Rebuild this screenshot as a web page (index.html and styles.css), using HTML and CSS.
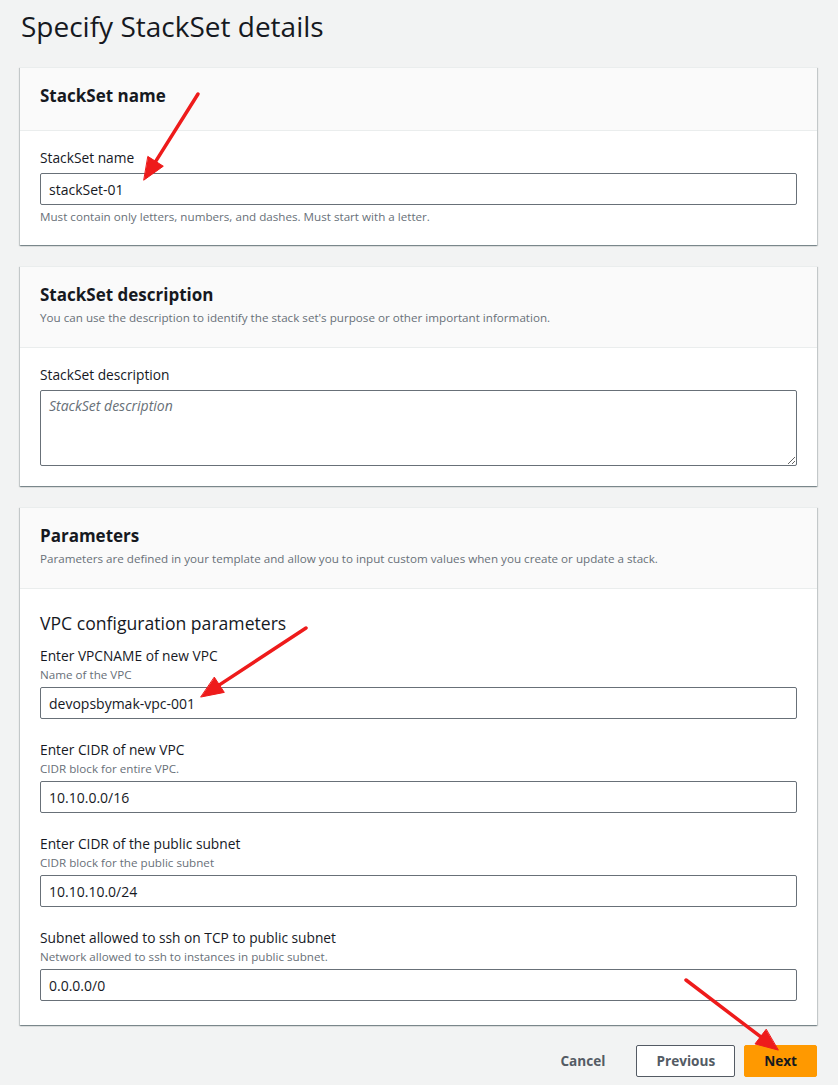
FILE: index.html
```html
<!DOCTYPE html>
<html lang="en">
<head>
<meta charset="utf-8">
<title>Specify StackSet details</title>
<link rel="stylesheet" href="styles.css">
</head>
<body>
<div class="page">
  <h1 class="page-title">Specify StackSet details</h1>

  <section class="card">
    <header class="card-header">
      <h2 class="card-title">StackSet name</h2>
    </header>
    <div class="card-body">
      <div class="field">
        <label class="field-label">StackSet name</label>
        <input class="input" type="text" value="stackSet-01">
        <div class="field-hint-after">Must contain only letters, numbers, and dashes. Must start with a letter.</div>
      </div>
    </div>
  </section>

  <section class="card">
    <header class="card-header">
      <h2 class="card-title">StackSet description</h2>
      <p class="card-desc">You can use the description to identify the stack set's purpose or other important information.</p>
    </header>
    <div class="card-body">
      <div class="field">
        <label class="field-label">StackSet description</label>
        <textarea class="textarea" placeholder="StackSet description"></textarea>
      </div>
    </div>
  </section>

  <section class="card">
    <header class="card-header">
      <h2 class="card-title">Parameters</h2>
      <p class="card-desc">Parameters are defined in your template and allow you to input custom values when you create or update a stack.</p>
    </header>
    <div class="card-body params">
      <h3 class="group-title">VPC configuration parameters</h3>
      <div class="field">
        <label class="field-label">Enter VPCNAME of new VPC</label>
        <div class="field-desc">Name of the VPC</div>
        <input class="input" type="text" value="devopsbymak-vpc-001">
      </div>
      <div class="field">
        <label class="field-label">Enter CIDR of new VPC</label>
        <div class="field-desc">CIDR block for entire VPC.</div>
        <input class="input" type="text" value="10.10.0.0/16">
      </div>
      <div class="field">
        <label class="field-label">Enter CIDR of the public subnet</label>
        <div class="field-desc">CIDR block for the public subnet</div>
        <input class="input" type="text" value="10.10.10.0/24">
      </div>
      <div class="field">
        <label class="field-label">Subnet allowed to ssh on TCP to public subnet</label>
        <div class="field-desc">Network allowed to ssh to instances in public subnet.</div>
        <input class="input" type="text" value="0.0.0.0/0">
      </div>
    </div>
  </section>

  <div class="actions">
    <button class="btn btn-link">Cancel</button>
    <button class="btn btn-normal">Previous</button>
    <button class="btn btn-primary">Next</button>
  </div>
</div>

<svg class="annotations" width="838" height="1085" viewBox="0 0 838 1085" xmlns="http://www.w3.org/2000/svg">
  <g stroke="#ee1b1b" stroke-width="3.5" stroke-linecap="round" fill="#ee1b1b">
    <line x1="198" y1="94" x2="155.7" y2="161.4"/>
    <polygon points="144,180 163.3,166.2 148.1,156.6" stroke-linejoin="round" stroke-width="1"/>
    <line x1="306" y1="628" x2="219.4" y2="684.9"/>
    <polygon points="201,697 224.3,692.4 214.5,677.4" stroke-linejoin="round" stroke-width="1"/>
    <line x1="686" y1="980" x2="760.5" y2="1036.7"/>
    <polygon points="778,1050 755,1043.9 766,1029.5" stroke-linejoin="round" stroke-width="1"/>
  </g>
</svg>
</body>
</html>
```

FILE: styles.css
```css
* { box-sizing: border-box; }

html, body {
  margin: 0;
  padding: 0;
  background: #f2f3f3;
}

body {
  position: relative;
  font-family: "Open Sans", "Noto Sans", Arial, sans-serif;
  color: #16191f;
  font-size: 14px;
  line-height: 22px;
  width: 838px;
  height: 1085px;
  overflow: hidden;
}

.page {
  padding: 8px 21px 0 20px;
}

.page-title {
  margin: 0 0 23px 1px;
  font-size: 28px;
  line-height: 36px;
  font-weight: 400;
  color: #16191f;
}

.card {
  background: #ffffff;
  margin-bottom: 21px;
  box-shadow: 0 1px 1px 0 rgba(0, 28, 36, 0.3),
              1px 1px 1px 0 rgba(0, 28, 36, 0.15),
              -1px 1px 1px 0 rgba(0, 28, 36, 0.15);
  border-top: 1px solid #eaeded;
}

.card-header {
  background: #fafafa;
  border-bottom: 1px solid #eaeded;
  padding: 17px 20px 23px;
}

.card-title {
  margin: 0;
  font-size: 17px;
  line-height: 22px;
  font-weight: 700;
  color: #16191f;
}

.card-desc {
  margin: 2px 0 -4px;
  font-size: 11.65px;
  line-height: 20px;
  color: #687078;
}

.card-body {
  padding: 16px 20px 20px;
  display: flex;
  flex-direction: column;
  gap: 20px;
}

.card-body.params {
  gap: 0;
  padding-bottom: 24px;
}

.params .field + .field {
  margin-top: 20px;
}

.group-title {
  margin: 4px 0 8px;
  font-size: 17.6px;
  line-height: 28px;
  font-weight: 400;
  color: #16191f;
}

.field {
  display: flex;
  flex-direction: column;
}

.field-label {
  font-size: 13.75px;
  line-height: 22px;
  color: #16191f;
}

.field-label + .input,
.field-label + .textarea {
  margin-top: 4px;
}

.field-desc {
  font-size: 11.65px;
  line-height: 16px;
  color: #687078;
  margin-bottom: 4px;
}

.field-hint-after {
  margin-top: 4px;
  font-size: 11.65px;
  line-height: 16px;
  color: #687078;
}

.input,
.textarea {
  font-family: "Open Sans", "Noto Sans", Arial, sans-serif;
  font-size: 14px;
  line-height: 22px;
  color: #16191f;
  background: #ffffff;
  border: 1px solid #687078;
  border-radius: 2px;
  padding: 4px 8px;
  width: 100%;
  outline: none;
  margin: 0;
}

.input {
  height: 32px;
}

.textarea {
  height: 76px;
  resize: vertical;
  display: block;
}

.textarea::placeholder {
  color: #687078;
  font-style: italic;
  opacity: 1;
}

.actions {
  display: flex;
  justify-content: flex-end;
  align-items: center;
  gap: 9px;
  margin-top: -1px;
}

.btn {
  font-family: "Open Sans", "Noto Sans", Arial, sans-serif;
  font-size: 13.6px;
  font-weight: 700;
  line-height: 22px;
  height: 32px;
  padding: 4px 19px;
  border-radius: 2px;
  border: 1px solid transparent;
  background: transparent;
  color: #545b64;
  cursor: pointer;
}

.btn-link {
  margin-right: 2px;
}

.btn-normal {
  background: #ffffff;
  border-color: #545b64;
  color: #545b64;
}

.btn-primary {
  background: #ff9900;
  border-color: #ff9900;
  color: #16191f;
}

.annotations {
  position: absolute;
  left: 0;
  top: 0;
  pointer-events: none;
}
```
